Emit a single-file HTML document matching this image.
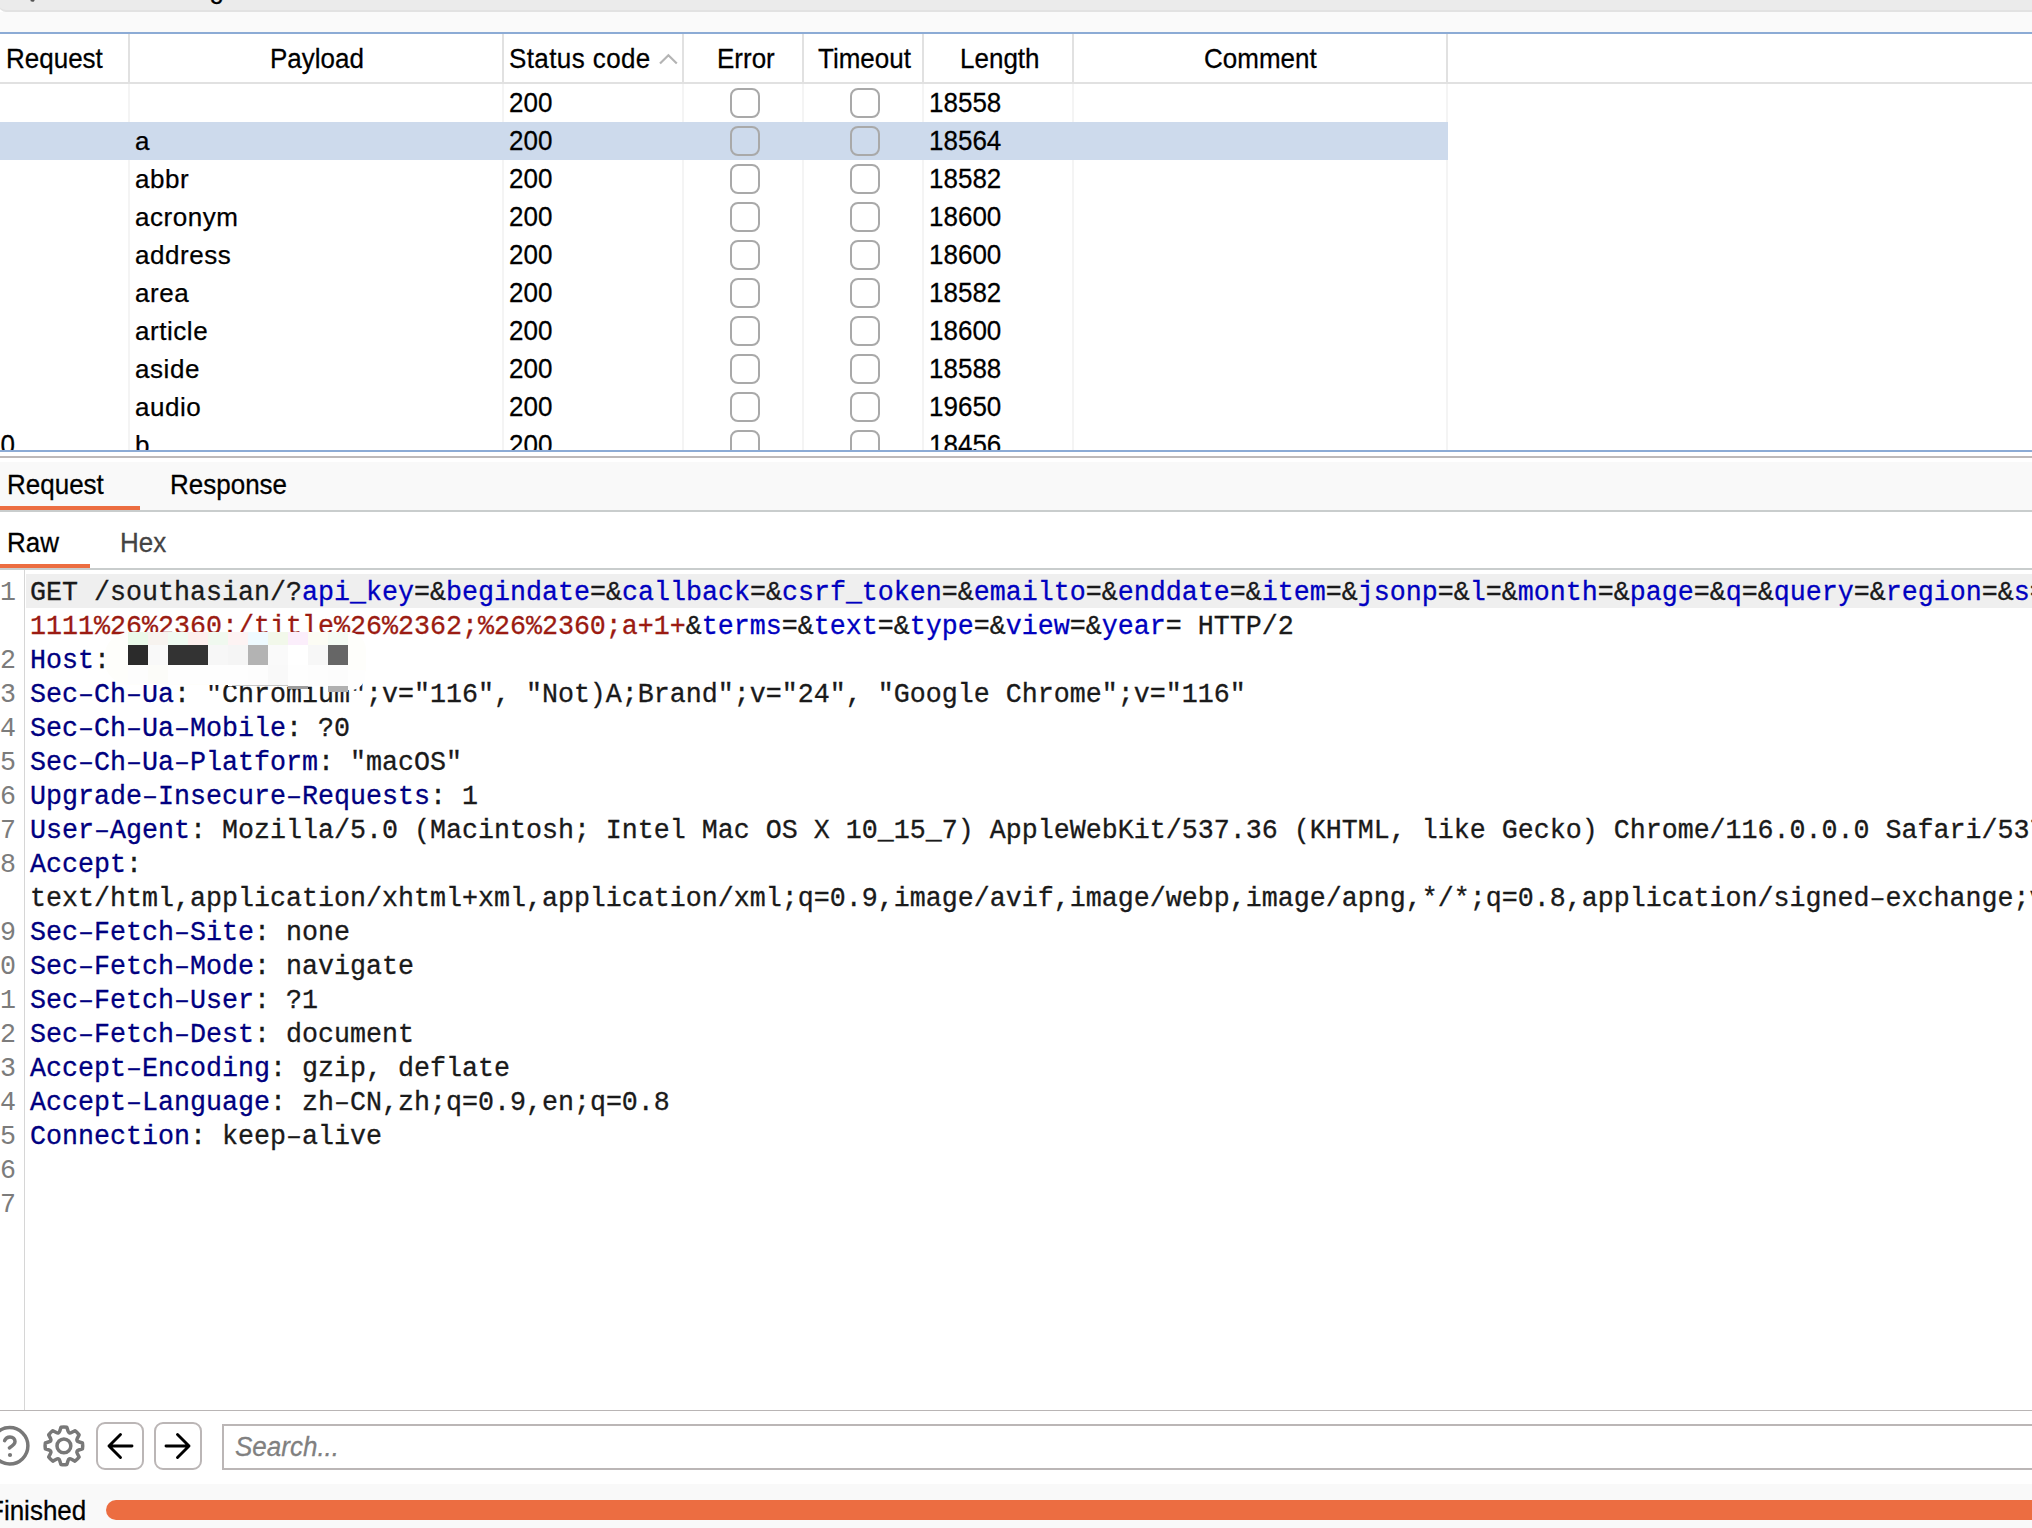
<!DOCTYPE html>
<html><head><meta charset="utf-8">
<style>
*{margin:0;padding:0;box-sizing:border-box}
html,body{width:2032px;height:1528px;overflow:hidden;background:#fff}
body{position:relative;font-family:"Liberation Sans",sans-serif;font-size:26px;color:#000}
.a{position:absolute}
.t{position:absolute;white-space:pre;line-height:30px;height:30px;transform:scaleY(1.05);transform-origin:0 24px;-webkit-text-stroke:0.25px currentColor}
/* top */
#topfield{left:-1px;top:-20px;width:2100px;height:32px;background:#ebebeb;border-bottom:2px solid #e2e2e2;border-bottom-left-radius:7px;overflow:hidden}
#below{left:0;top:12px;width:2032px;height:20px;background:#fafafa}
#blue1{left:0;top:32px;width:2032px;height:2px;background:#8cabd5}
/* table */
.hsep{position:absolute;top:34px;width:2px;height:48px;background:#e1e1e1}
.gsep{position:absolute;top:84px;width:2px;height:366px;background:#f4f4f4}
#hbot{left:0;top:82px;width:2032px;height:2px;background:#e1e1e1}
#sel{left:0;top:122px;width:1448px;height:38px;background:#cddaec}
.cb{position:absolute;width:30px;height:30px;border:2px solid #a9a9a9;border-radius:8px}
#tblclip{left:0;top:84px;width:2032px;height:366px;overflow:hidden}
#blue2{left:0;top:450px;width:2032px;height:2px;background:#8cabd5}
#split{left:0;top:456px;width:2032px;height:2px;background:#bdb9b9}
#tabbar{left:0;top:462px;width:2032px;height:48px;background:#f9f9f9}
#tabline{left:0;top:510px;width:2032px;height:2px;background:#c9cdcd}
#tabul{left:0;top:506px;width:140px;height:4px;background:#ec6d41}
#subul{left:0;top:564px;width:90px;height:4px;background:#ec6d41}
#subline{left:0;top:568px;width:2032px;height:2px;background:#c9cdcd}
#gutter{left:24px;top:570px;width:1px;height:840px;background:#d6d6d6}
#hl1{left:26px;top:574px;width:2010px;height:34px;background:#efefef}
.code{position:absolute;left:30px;-webkit-text-stroke:0.3px currentColor;transform:translateY(2px) scaleY(1.05);transform-origin:0 24px;font-family:"Liberation Mono",monospace;font-size:26.67px;line-height:34px;height:34px;white-space:pre;color:#1a1a1a}
.ln{position:absolute;left:0;transform:translateY(2px) scaleY(1.05);transform-origin:0 24px;width:16px;font-family:"Liberation Mono",monospace;font-size:26.67px;line-height:34px;height:34px;white-space:pre;color:#7c7c7c;text-align:right}
.k{color:#000080}.p{color:#0000c0}.r{color:#9b1b12}
#botline{left:0;top:1410px;width:2032px;height:1px;background:#b9b5b5}
.btn{position:absolute;top:1422px;width:48px;height:48px;border:2px solid #bbb6b6;border-radius:9px}
#search{left:222px;top:1424px;width:1900px;height:46px;border:2px solid #bbb6b6}
#status{left:0;top:1484px;width:2032px;height:44px;background:#f9f9f9}
#prog{left:106px;top:1500px;width:2000px;height:20px;border-radius:10px;background:#ec6d41}
</style></head><body>
<div id="topfield" class="a"></div>
<div class="t" style="left:52px;top:-26px;color:#000">Filter: Showing all items</div>
<svg class="a" style="left:20px;top:0" width="30" height="10" viewBox="0 0 30 10"><path d="M11,-6 L12,0 L13,0.3" fill="none" stroke="#555" stroke-width="3" stroke-linecap="round"/></svg>

<div id="below" class="a"></div>
<div id="blue1" class="a"></div>

<div id="hbot" class="a"></div>
<div class="hsep" style="left:128px"></div>
<div class="hsep" style="left:502px"></div>
<div class="hsep" style="left:682px"></div>
<div class="hsep" style="left:802px"></div>
<div class="hsep" style="left:922px"></div>
<div class="hsep" style="left:1072px"></div>
<div class="hsep" style="left:1446px"></div>

<div class="t" style="left:6px;top:44px">Request</div>
<div class="t" style="left:270px;top:44px">Payload</div>
<div class="t" style="left:509px;top:44px;letter-spacing:0.4px">Status code</div>
<svg class="a" style="left:655px;top:51px" width="26" height="16" viewBox="0 0 26 16"><path d="M5,12.5 L13.4,4.3 L21.8,12.5" fill="none" stroke="#b4b4b4" stroke-width="2.2"/></svg>
<div class="t" style="left:717px;top:44px">Error</div>
<div class="t" style="left:818px;top:44px">Timeout</div>
<div class="t" style="left:960px;top:44px">Length</div>
<div class="t" style="left:1204px;top:44px">Comment</div>

<div id="tblclip" class="a">
<div class="gsep" style="left:128px;top:0"></div>
<div class="gsep" style="left:502px;top:0"></div>
<div class="gsep" style="left:682px;top:0"></div>
<div class="gsep" style="left:802px;top:0"></div>
<div class="gsep" style="left:922px;top:0"></div>
<div class="gsep" style="left:1072px;top:0"></div>
<div class="gsep" style="left:1446px;top:0"></div>
<div id="sel" class="a" style="top:38px"></div>
<div class="t" style="left:509px;top:4px">200</div>
<div class="t" style="left:929px;top:4px">18558</div>
<div class="cb" style="left:730px;top:4px"></div>
<div class="cb" style="left:850px;top:4px"></div>
<div class="t" style="left:135px;top:42px;letter-spacing:0.55px;transform:none">a</div>
<div class="t" style="left:509px;top:42px">200</div>
<div class="t" style="left:929px;top:42px">18564</div>
<div class="cb" style="left:730px;top:42px"></div>
<div class="cb" style="left:850px;top:42px"></div>
<div class="t" style="left:135px;top:80px;letter-spacing:0.55px;transform:none">abbr</div>
<div class="t" style="left:509px;top:80px">200</div>
<div class="t" style="left:929px;top:80px">18582</div>
<div class="cb" style="left:730px;top:80px"></div>
<div class="cb" style="left:850px;top:80px"></div>
<div class="t" style="left:135px;top:118px;letter-spacing:0.55px;transform:none">acronym</div>
<div class="t" style="left:509px;top:118px">200</div>
<div class="t" style="left:929px;top:118px">18600</div>
<div class="cb" style="left:730px;top:118px"></div>
<div class="cb" style="left:850px;top:118px"></div>
<div class="t" style="left:135px;top:156px;letter-spacing:0.55px;transform:none">address</div>
<div class="t" style="left:509px;top:156px">200</div>
<div class="t" style="left:929px;top:156px">18600</div>
<div class="cb" style="left:730px;top:156px"></div>
<div class="cb" style="left:850px;top:156px"></div>
<div class="t" style="left:135px;top:194px;letter-spacing:0.55px;transform:none">area</div>
<div class="t" style="left:509px;top:194px">200</div>
<div class="t" style="left:929px;top:194px">18582</div>
<div class="cb" style="left:730px;top:194px"></div>
<div class="cb" style="left:850px;top:194px"></div>
<div class="t" style="left:135px;top:232px;letter-spacing:0.55px;transform:none">article</div>
<div class="t" style="left:509px;top:232px">200</div>
<div class="t" style="left:929px;top:232px">18600</div>
<div class="cb" style="left:730px;top:232px"></div>
<div class="cb" style="left:850px;top:232px"></div>
<div class="t" style="left:135px;top:270px;letter-spacing:0.55px;transform:none">aside</div>
<div class="t" style="left:509px;top:270px">200</div>
<div class="t" style="left:929px;top:270px">18588</div>
<div class="cb" style="left:730px;top:270px"></div>
<div class="cb" style="left:850px;top:270px"></div>
<div class="t" style="left:135px;top:308px;letter-spacing:0.55px;transform:none">audio</div>
<div class="t" style="left:509px;top:308px">200</div>
<div class="t" style="left:929px;top:308px">19650</div>
<div class="cb" style="left:730px;top:308px"></div>
<div class="cb" style="left:850px;top:308px"></div>
<div class="t" style="left:-14px;top:346px">10</div>
<div class="t" style="left:135px;top:346px;letter-spacing:0.55px;transform:none">b</div>
<div class="t" style="left:509px;top:346px">200</div>
<div class="t" style="left:929px;top:346px">18456</div>
<div class="cb" style="left:730px;top:346px"></div>
<div class="cb" style="left:850px;top:346px"></div>
</div>
<div id="blue2" class="a"></div>
<div id="split" class="a"></div>
<div id="tabbar" class="a"></div>
<div id="tabul" class="a"></div>
<div id="tabline" class="a"></div>
<div class="t" style="left:7px;top:470px">Request</div>
<div class="t" style="left:170px;top:470px">Response</div>
<div id="subul" class="a"></div>
<div id="subline" class="a"></div>
<div class="t" style="left:7px;top:528px">Raw</div>
<div class="t" style="left:120px;top:528px;color:#444">Hex</div>

<div id="gutter" class="a"></div>
<div id="hl1" class="a"></div>
<div class="ln" style="top:574px">1</div>
<div class="code" style="top:574px">GET /southasian/?<span class="p">api_key</span>=&amp;<span class="p">begindate</span>=&amp;<span class="p">callback</span>=&amp;<span class="p">csrf_token</span>=&amp;<span class="p">emailto</span>=&amp;<span class="p">enddate</span>=&amp;<span class="p">item</span>=&amp;<span class="p">jsonp</span>=&amp;<span class="p">l</span>=&amp;<span class="p">month</span>=&amp;<span class="p">page</span>=&amp;<span class="p">q</span>=&amp;<span class="p">query</span>=&amp;<span class="p">region</span>=&amp;<span class="p">s</span>=</div>
<div class="code" style="top:608px"><span class="r">1111%26%2360:/title%26%2362;%26%2360;a+1+</span>&amp;<span class="p">terms</span>=&amp;<span class="p">text</span>=&amp;<span class="p">type</span>=&amp;<span class="p">view</span>=&amp;<span class="p">year</span>= HTTP/2</div>
<div class="ln" style="top:642px">2</div>
<div class="code" style="top:642px"><span class="k">Host</span>: </div>
<div class="ln" style="top:676px">3</div>
<div class="code" style="top:676px"><span class="k">Sec–Ch–Ua</span>: "Chromium";v="116", "Not)A;Brand";v="24", "Google Chrome";v="116"</div>
<div class="ln" style="top:710px">4</div>
<div class="code" style="top:710px"><span class="k">Sec–Ch–Ua–Mobile</span>: ?0</div>
<div class="ln" style="top:744px">5</div>
<div class="code" style="top:744px"><span class="k">Sec–Ch–Ua–Platform</span>: "macOS"</div>
<div class="ln" style="top:778px">6</div>
<div class="code" style="top:778px"><span class="k">Upgrade–Insecure–Requests</span>: 1</div>
<div class="ln" style="top:812px">7</div>
<div class="code" style="top:812px"><span class="k">User–Agent</span>: Mozilla/5.0 (Macintosh; Intel Mac OS X 10_15_7) AppleWebKit/537.36 (KHTML, like Gecko) Chrome/116.0.0.0 Safari/537.36</div>
<div class="ln" style="top:846px">8</div>
<div class="code" style="top:846px"><span class="k">Accept</span>:</div>
<div class="code" style="top:880px">text/html,application/xhtml+xml,application/xml;q=0.9,image/avif,image/webp,image/apng,*/*;q=0.8,application/signed–exchange;v=b3;q=0.7</div>
<div class="ln" style="top:914px">9</div>
<div class="code" style="top:914px"><span class="k">Sec–Fetch–Site</span>: none</div>
<div class="ln" style="top:948px">0</div>
<div class="code" style="top:948px"><span class="k">Sec–Fetch–Mode</span>: navigate</div>
<div class="ln" style="top:982px">1</div>
<div class="code" style="top:982px"><span class="k">Sec–Fetch–User</span>: ?1</div>
<div class="ln" style="top:1016px">2</div>
<div class="code" style="top:1016px"><span class="k">Sec–Fetch–Dest</span>: document</div>
<div class="ln" style="top:1050px">3</div>
<div class="code" style="top:1050px"><span class="k">Accept–Encoding</span>: gzip, deflate</div>
<div class="ln" style="top:1084px">4</div>
<div class="code" style="top:1084px"><span class="k">Accept–Language</span>: zh–CN,zh;q=0.9,en;q=0.8</div>
<div class="ln" style="top:1118px">5</div>
<div class="code" style="top:1118px"><span class="k">Connection</span>: keep–alive</div>
<div class="ln" style="top:1152px">6</div>
<div class="ln" style="top:1186px">7</div>

<div class="a" style="left:104px;top:632px;width:262px;height:53px;background:#fefefb;border-radius:26px 18px 18px 26px"></div>
<div class="a" style="left:340px;top:670px;width:25px;height:20px;background:#fefefe;border-radius:0 0 14px 0"></div>
<div class="a" style="left:128px;top:632px;width:20px;height:13px;background:#eafaea"></div>
<div class="a" style="left:148px;top:632px;width:20px;height:13px;background:#f7f3ef"></div>
<div class="a" style="left:168px;top:632px;width:20px;height:13px;background:#effbf2"></div>
<div class="a" style="left:188px;top:632px;width:20px;height:13px;background:#fdf0ee"></div>
<div class="a" style="left:208px;top:632px;width:20px;height:13px;background:#f0f9ef"></div>
<div class="a" style="left:228px;top:632px;width:20px;height:13px;background:#fdf3f3"></div>
<div class="a" style="left:248px;top:632px;width:20px;height:13px;background:#eefaff"></div>
<div class="a" style="left:268px;top:632px;width:20px;height:13px;background:#f2f8ea"></div>
<div class="a" style="left:288px;top:632px;width:20px;height:13px;background:#fbeefb"></div>
<div class="a" style="left:308px;top:632px;width:20px;height:13px;background:#fcfcf4"></div>
<div class="a" style="left:328px;top:632px;width:20px;height:13px;background:#f4fbf4"></div>
<div class="a" style="left:128px;top:645px;width:20px;height:20px;background:#2b2b2b"></div>
<div class="a" style="left:148px;top:645px;width:20px;height:20px;background:#f9f9f9"></div>
<div class="a" style="left:168px;top:645px;width:20px;height:20px;background:#333333"></div>
<div class="a" style="left:188px;top:645px;width:20px;height:20px;background:#333333"></div>
<div class="a" style="left:208px;top:645px;width:20px;height:20px;background:#f7f7f7"></div>
<div class="a" style="left:228px;top:645px;width:20px;height:20px;background:#f5f5f5"></div>
<div class="a" style="left:248px;top:645px;width:20px;height:20px;background:#b3b3b3"></div>
<div class="a" style="left:268px;top:645px;width:20px;height:20px;background:#fafafa"></div>
<div class="a" style="left:288px;top:645px;width:20px;height:20px;background:#ffffff"></div>
<div class="a" style="left:308px;top:645px;width:20px;height:20px;background:#f7f7f7"></div>
<div class="a" style="left:328px;top:645px;width:20px;height:20px;background:#666666"></div>
<div class="a" style="left:128px;top:665px;width:20px;height:19px;background:#fdfdfd"></div>
<div class="a" style="left:148px;top:665px;width:20px;height:19px;background:#fcfcf9"></div>
<div class="a" style="left:168px;top:665px;width:20px;height:19px;background:#fefefe"></div>
<div class="a" style="left:188px;top:665px;width:20px;height:19px;background:#fefefe"></div>
<div class="a" style="left:208px;top:665px;width:20px;height:19px;background:#fefefe"></div>
<div class="a" style="left:228px;top:665px;width:20px;height:21px;background:#fefefe"></div>
<div class="a" style="left:248px;top:665px;width:20px;height:21px;background:#fdfdfd"></div>
<div class="a" style="left:268px;top:665px;width:20px;height:21px;background:#f9f9f9"></div>
<div class="a" style="left:288px;top:665px;width:20px;height:21px;background:#fefefe"></div>
<div class="a" style="left:308px;top:665px;width:20px;height:21px;background:#fdfdfd"></div>
<div class="a" style="left:328px;top:665px;width:20px;height:21px;background:#fcfcfc"></div>
<div class="a" style="left:232px;top:685px;width:56px;height:1px;background:#c8c8c8"></div>
<div class="a" style="left:288px;top:686px;width:20px;height:3px;background:#9d9d9d"></div>
<div class="a" style="left:328px;top:686px;width:20px;height:6px;background:#b0b0b0"></div>
<div id="botline" class="a"></div>
<div class="btn" style="left:96px"></div>
<div class="btn" style="left:154px"></div>
<svg class="a" style="left:0;top:1420px" width="210" height="52" viewBox="0 0 210 52">
<circle cx="9.7" cy="25.8" r="18.2" fill="none" stroke="#787878" stroke-width="3.5"/>
<path d="M4.6,20.6 C5.6,17.9 7.8,16.9 10,16.9 C13,16.9 15,19 15,21.6 C15,24.6 12.6,25.9 9.4,27.9" fill="none" stroke="#787878" stroke-width="3.5" stroke-linecap="round"/>
<circle cx="10" cy="35" r="2.1" fill="#787878"/>
<path d="M59.78,11.06L60.96,7.33A18.80,18.80 0 0 1 66.84,7.33L68.02,11.06Q68.87,13.89 71.48,12.50L74.95,10.69A18.80,18.80 0 0 1 79.11,14.85L77.30,18.32Q75.91,20.93 78.74,21.78L82.47,22.96A18.80,18.80 0 0 1 82.47,28.84L78.74,30.02Q75.91,30.87 77.30,33.48L79.11,36.95A18.80,18.80 0 0 1 74.95,41.11L71.48,39.30Q68.87,37.91 68.02,40.74L66.84,44.47A18.80,18.80 0 0 1 60.96,44.47L59.78,40.74Q58.93,37.91 56.32,39.30L52.85,41.11A18.80,18.80 0 0 1 48.69,36.95L50.50,33.48Q51.89,30.87 49.06,30.02L45.33,28.84A18.80,18.80 0 0 1 45.33,22.96L49.06,21.78Q51.89,20.93 50.50,18.32L48.69,14.85A18.80,18.80 0 0 1 52.85,10.69L56.32,12.50Q58.93,13.89 59.78,11.06Z" fill="none" stroke="#787878" stroke-width="3.5" stroke-linejoin="round"/>
<circle cx="63.9" cy="25.9" r="6.9" fill="none" stroke="#787878" stroke-width="3.5"/>
<path d="M132,26 H109 M120.5,14.5 L109,26 L120.5,37.5" fill="none" stroke="#000" stroke-width="2.9" stroke-linecap="round" stroke-linejoin="round"/>
<path d="M166,26 H189 M177.5,14.5 L189,26 L177.5,37.5" fill="none" stroke="#000" stroke-width="2.9" stroke-linecap="round" stroke-linejoin="round"/>
</svg>
<div id="search" class="a"></div>
<div class="t" style="left:235px;top:1432px;font-style:italic;color:#808080">Search...</div>
<div id="status" class="a"></div>
<div class="t" style="left:-12px;top:1496px">Finished</div>
<div id="prog" class="a"></div>
</body></html>
